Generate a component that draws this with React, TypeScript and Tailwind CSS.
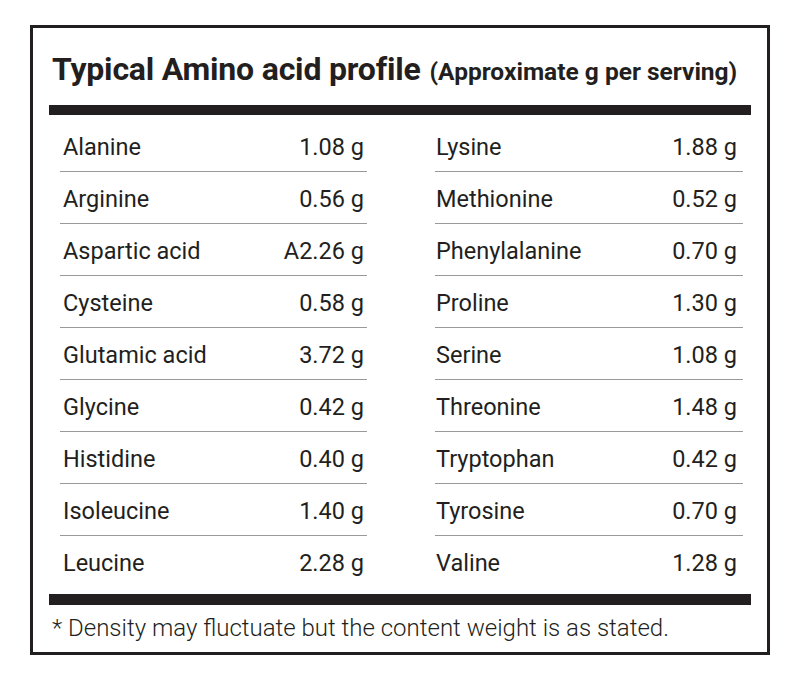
const LEFT: [string, string][] = [
  ['Alanine', '1.08 g'],
  ['Arginine', '0.56 g'],
  ['Aspartic acid', 'A2.26 g'],
  ['Cysteine', '0.58 g'],
  ['Glutamic acid', '3.72 g'],
  ['Glycine', '0.42 g'],
  ['Histidine', '0.40 g'],
  ['Isoleucine', '1.40 g'],
  ['Leucine', '2.28 g'],
];

const RIGHT: [string, string][] = [
  ['Lysine', '1.88 g'],
  ['Methionine', '0.52 g'],
  ['Phenylalanine', '0.70 g'],
  ['Proline', '1.30 g'],
  ['Serine', '1.08 g'],
  ['Threonine', '1.48 g'],
  ['Tryptophan', '0.42 g'],
  ['Tyrosine', '0.70 g'],
  ['Valine', '1.28 g'],
];

function Column({ rows, inset }: { rows: [string, string][]; inset: string }) {
  return (
    <ul className="flex flex-col">
      {rows.map(([name, amount], i) => (
        <li
          key={name}
          className={`flex h-[52px] items-center justify-between pt-[4px] ${inset} ${
            i < rows.length - 1 ? 'border-b border-[#9a9a9a]' : ''
          }`}
        >
          <span>{name}</span>
          <span>{amount}</span>
        </li>
      ))}
    </ul>
  );
}

export default function App() {
  return (
    <div className="h-[681px] w-[800px] bg-white pl-[30px] pt-[25px] font-['Roboto','Liberation_Sans',sans-serif] text-[#231f20]">
      <div className="flex h-[630px] w-[740px] flex-col border-[3px] border-[#231f20] px-[16px]">
        <h1 className="flex h-[77px] items-baseline gap-[9px] pl-[3px] pt-[25px] leading-none">
          <span className="text-[32px] font-bold tracking-[-0.2px]">Typical Amino acid profile</span>
          <span className="text-[24.5px] font-bold">(Approximate g per serving)</span>
        </h1>
        <div className="h-[10px] bg-[#231f20]" />
        <div className="mt-[5px] grid grid-cols-[307px_308px] gap-x-[68px] pl-[11px] text-[23.5px]">
          <Column rows={LEFT} inset="pl-[3px] pr-[3px]" />
          <Column rows={RIGHT} inset="pl-[1px] pr-[6px]" />
        </div>
        <div className="mt-[6px] h-[11px] bg-[#231f20]" />
        <p className="flex flex-1 items-center pb-[2px] pl-[3px] text-[24px] font-light">
          * Density may fluctuate but the content weight is as stated.
        </p>
      </div>
    </div>
  );
}
